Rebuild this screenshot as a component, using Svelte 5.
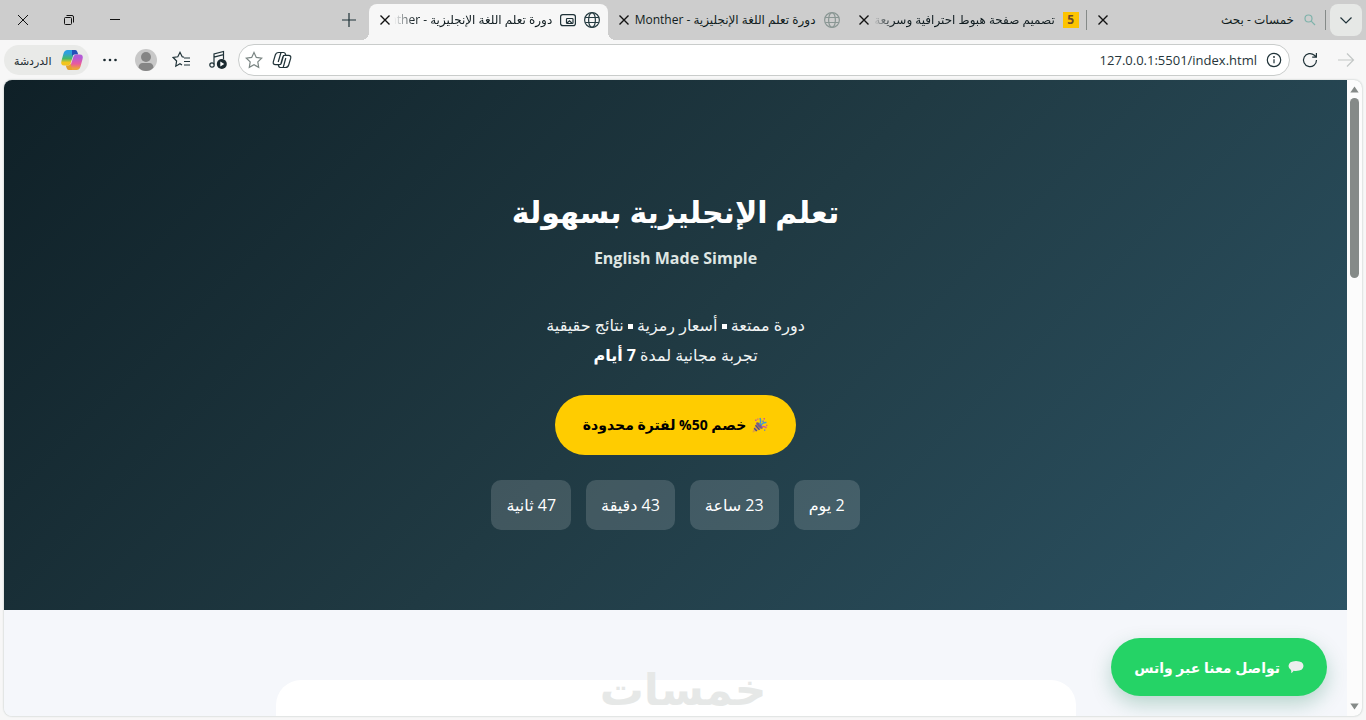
<script>
	const tabs = [
		{ title: 'خمسات - بحث', icon: 'search' },
		{ title: 'تصميم صفحة هبوط احترافية وسريعة', icon: 'five', fade: true },
		{ title: 'دورة تعلم اللغة الإنجليزية - Monther', icon: 'globe' },
		{ title: 'دورة تعلم اللغة الإنجليزية - Monther', icon: 'globe', pip: true, fade: true }
	];

	let active = $state(3);
	let url = $state('127.0.0.1:5501/index.html');

	const countdown = [
		{ value: 2, unit: 'يوم' },
		{ value: 23, unit: 'ساعة' },
		{ value: 43, unit: 'دقيقة' },
		{ value: 47, unit: 'ثانية' }
	];
</script>

<div class="browser" dir="rtl">
	<header class="tabstrip">
		<button class="tab-menu" aria-label="قائمة علامات التبويب">
			<svg width="16" height="16" viewBox="0 0 16 16"><path d="M2.5 5.5 8 11 13.5 5.5" /></svg>
		</button>

		<div class="tabs">
			{#each tabs as tab, i}
				<div class="tab" class:active={i === active} class:divided={i < 2}>
					{#if tab.icon === 'search'}
						<svg class="icon search" width="16" height="16" viewBox="0 0 16 16">
							<circle cx="6.5" cy="6.5" r="3.5" /><path d="M9.2 9.2 13 13" />
						</svg>
					{:else if tab.icon === 'five'}
						<span class="icon five">5</span>
					{:else}
						<svg class="icon globe" width="16" height="16" viewBox="0 0 16 16">
							<circle cx="8" cy="8" r="7.4" />
							<ellipse cx="8" cy="8" rx="3.4" ry="7.4" />
							<path d="M1.2 5.5H14.8M1.2 10.5H14.8" />
						</svg>
					{/if}
					{#if tab.pip}
						<svg class="icon pip" width="16" height="16" viewBox="0 0 16 16">
							<rect x="0.6" y="2.6" width="14.8" height="11" rx="2.2" />
							<rect x="6.5" y="6.5" width="6.5" height="5" rx="0.8" />
							<path d="M7 11 9.5 8.8 12 11.2" />
						</svg>
					{/if}
					<button class="title" class:fade={tab.fade} onclick={() => (active = i)}>{tab.title}</button>
					<button class="close" aria-label="إغلاق">
						<svg width="16" height="16" viewBox="0 0 16 16"><path d="M3.5 3.5 12.5 12.5M12.5 3.5 3.5 12.5" /></svg>
					</button>
				</div>
			{/each}
		</div>

		<button class="new-tab" aria-label="علامة تبويب جديدة">
			<svg width="16" height="16" viewBox="0 0 16 16"><path d="M8 1V15M1 8H15" /></svg>
		</button>

		<div class="window-controls">
			<button aria-label="تصغير">
				<svg width="12" height="12" viewBox="0 0 12 12"><path d="M1 5.5H11" /></svg>
			</button>
			<button aria-label="استعادة">
				<svg width="12" height="12" viewBox="0 0 12 12">
					<rect x="1.5" y="3.5" width="7" height="7" rx="1" />
					<path d="M3.5 1.5H9Q10.5 1.5 10.5 3V8.5" />
				</svg>
			</button>
			<button aria-label="إغلاق النافذة">
				<svg width="12" height="12" viewBox="0 0 12 12"><path d="M1 1 11 11M11 1 1 11" /></svg>
			</button>
		</div>
	</header>

	<nav class="toolbar">
		<button class="tool forward" aria-label="للأمام" disabled>
			<svg width="18" height="18" viewBox="0 0 18 18"><path d="M1 9H16.5M10 2.5 16.5 9 10 15.5" /></svg>
		</button>
		<button class="tool" aria-label="تحديث">
			<svg width="18" height="18" viewBox="0 0 18 18"><path d="M15.5 9A6.5 6.5 0 1 1 13.4 4.3L15.3 6M15.4 2V6.2H11.2" /></svg>
		</button>

		<div class="address">
			<button class="tool info" aria-label="معلومات الموقع">
				<svg width="16" height="16" viewBox="0 0 16 16">
					<circle cx="8" cy="8" r="6.7" /><path d="M8 7.2V11.3" /><circle class="dot" cx="8" cy="5" r="0.9" />
				</svg>
			</button>
			<input type="text" dir="ltr" aria-label="العنوان" bind:value={url} />
			<button class="tool" aria-label="Copilot">
				<svg width="20" height="20" viewBox="0 0 20 20">
					<path d="M6.7 2.5H11.6Q13 2.5 13.4 4L13.8 5.4H16.6Q19.3 5.4 18.7 8.2L16.7 15Q16 17.5 13.3 17.5H8.4Q7 17.5 6.6 16L6.2 14.6H3.4Q.7 14.6 1.3 11.8L3.3 5Q4 2.5 6.7 2.5Z" />
					<path d="M13.8 5.4H12.6Q11.2 5.4 10.8 6.8L8.6 14.6M6.2 14.6H7.6Q9 14.6 9.4 13.2L11.6 5.4M9 2.5 6.2 12M11.2 17.5 13.8 8" />
				</svg>
			</button>
			<button class="tool star" aria-label="إضافة إلى المفضلة">
				<svg width="18" height="18" viewBox="0 0 18 18">
					<path d="M9 1.5 11.3 6.4 16.7 7.1 12.8 10.9 13.7 16.3 9 13.7 4.3 16.3 5.2 10.9 1.3 7.1 6.7 6.4Z" />
				</svg>
			</button>
		</div>

		<div class="actions">
			<button class="tool" aria-label="الوسائط">
				<svg width="20" height="20" viewBox="0 0 20 20">
					<path d="M6 14.5V4L15.5 1.5V9M6 7.2 15.5 4.7" />
					<circle cx="4" cy="15" r="2.2" />
					<circle class="dot" cx="13.8" cy="14" r="5" />
					<path class="play" d="M12.3 11.6V16.4L16.3 14Z" />
				</svg>
			</button>
			<button class="tool" aria-label="المفضلة">
				<svg width="20" height="20" viewBox="0 0 20 20">
					<path d="M12 7.2 10.2 6.8 8 2.3 5.8 6.8 1.2 7.5 4.6 11 3.8 16.2 8 13.8 10 15M12 8H18M12 11.5H18M12 15H18" />
				</svg>
			</button>
			<button class="tool" aria-label="الملف الشخصي">
				<svg class="avatar" width="22" height="22" viewBox="0 0 22 22">
					<circle cx="11" cy="11" r="11" fill="#c8c8c8" />
					<circle cx="11" cy="8" r="5" fill="#858585" />
					<path d="M3.5 18.5Q4 14 7.5 14H14.5Q18 14 18.5 18.5Q15.5 22 11 22T3.5 18.5Z" fill="#858585" />
				</svg>
			</button>
			<button class="tool" aria-label="المزيد">
				<svg width="16" height="16" viewBox="0 0 16 16">
					<circle class="dot" cx="2.5" cy="8" r="1.3" /><circle class="dot" cx="8" cy="8" r="1.3" /><circle class="dot" cx="13.5" cy="8" r="1.3" />
				</svg>
			</button>
		</div>

		<button class="chat">
			<svg width="24" height="24" viewBox="0 0 24 24">
				<defs>
					<linearGradient id="cool" x1="0" y1="0" x2="0" y2="1">
						<stop offset="0.2" stop-color="#2d9fe0" /><stop offset="0.55" stop-color="#45b96b" /><stop offset="0.8" stop-color="#f2c51d" />
					</linearGradient>
					<linearGradient id="warm" x1="0" y1="0" x2="0" y2="1">
						<stop offset="0.2" stop-color="#b45bd6" /><stop offset="0.6" stop-color="#ea5a9d" /><stop offset="0.9" stop-color="#eda23b" />
					</linearGradient>
				</defs>
				<path d="M7.5 2H15L10.5 15.5Q9.8 17.5 7.6 17.5H4.2Q.2 17.5 1.5 12.8L3.5 5.5Q4.5 2 7.5 2Z" fill="url(#cool)" />
				<path d="M12 2H15.3Q16.8 2 17.4 4L18.2 6.5H14.5Q12.5 6.5 12 8.5Z" fill="#2450b8" />
				<path d="M16.5 22H9L13.5 8.5Q14.2 6.5 16.4 6.5H19.8Q23.8 6.5 22.5 11.2L20.5 18.5Q19.5 22 16.5 22Z" fill="url(#warm)" />
				<path d="M12 22H8.7Q7.2 22 6.6 20L5.8 17.5H8Q10 17.5 10.7 15.5Z" fill="#e5a12c" />
			</svg>
			الدردشة
		</button>
	</nav>

	<div class="viewport">
		<main class="page">
			<section class="hero">
				<h1>تعلم الإنجليزية بسهولة</h1>
				<h2 dir="ltr">English Made Simple</h2>
				<p>
					دورة ممتعة <i class="bullet"></i> أسعار رمزية <i class="bullet"></i> نتائج حقيقية<br />
					تجربة مجانية لمدة <strong>7 أيام</strong>
				</p>
				<button class="offer">
					<svg width="16" height="16" viewBox="0 0 16 16">
						<path d="M4.5 5.5 10.5 11.5 1 15.5Q.4 15.4.5 14.8Z" fill="#e3a33a" />
						<path d="M3.5 8.3 7.5 12.7M2.2 11.2 4.8 14" stroke="#4a4e8c" stroke-width="1.4" />
						<ellipse cx="7.5" cy="8.5" rx="1.7" ry="4.2" transform="rotate(-45 7.5 8.5)" fill="#7a5a84" />
						<path d="M7.5 7.5Q9.5 5 8 1M9 8.5Q10.5 5 14.5 5.5" fill="none" stroke="#3f9bd8" stroke-width="1.5" />
						<path d="M9.5 10Q12 8.5 14.5 11" fill="none" stroke="#c95aa5" stroke-width="1.4" />
						<path d="M3 2.5H4.6V4H3ZM11.5 1H13V2.5H11.5ZM5.2 1.5H6.4V2.7H5.2ZM14 7.8H15.4V9.2H14Z" fill="#d45b93" />
						<path d="M10.3 3.5H11.7V5H10.3ZM12 12.5H13.3V13.8H12Z" fill="#5b7fd0" />
					</svg>
					خصم 50% لفترة محدودة
				</button>
				<div class="countdown">
					{#each countdown as { value, unit }}
						<span class="unit">{value} {unit}</span>
					{/each}
				</div>
			</section>

			<section class="content">
				<div class="card"></div>
			</section>
		</main>

		<div class="scrollbar">
			<svg width="9" height="7" viewBox="0 0 9 7"><path d="M4.5 0.5 8.7 6.5H.3Z" /></svg>
			<div class="track"><div class="thumb"></div></div>
			<svg width="9" height="7" viewBox="0 0 9 7"><path d="M4.5 6.5 8.7.5H.3Z" /></svg>
		</div>

		<a class="whatsapp" href="#whatsapp">
			<svg width="16" height="14" viewBox="0 0 16 14">
				<path d="M8 1Q15.5 1.2 15.5 6Q15.3 10.8 8 11Q6.8 11 5.6 10.8Q4.8 12.8 3 13Q3.6 11.6 3 10Q.5 8.7.5 6Q.7 1.2 8 1Z" />
			</svg>
			تواصل معنا عبر واتس
		</a>

		<div class="watermark">خمسات</div>
	</div>
</div>

<style>
	:global(body) {
		margin: 0;
	}

	.browser {
		display: flex;
		flex-direction: column;
		height: 100vh;
		overflow: hidden;
		background: #f7f7f7;
		color: #1b2a30;
		font-family: "Open Sans", "DejaVu Sans", sans-serif;
	}

	button {
		padding: 0;
		border: 0;
		background: none;
		color: inherit;
		font: inherit;
		cursor: pointer;
	}

	svg {
		display: block;
		flex: none;
	}

	.tabstrip svg,
	.tool svg {
		fill: none;
		stroke: #1f3238;
		stroke-width: 1.2;
	}

	/* tab strip */
	.tabstrip {
		display: flex;
		flex: none;
		height: 40px;
		padding-right: 4px;
		background: #cdcdcd;
	}

	.tab-menu {
		display: grid;
		place-items: center;
		width: 32px;
		height: 32px;
		margin: 4px 0 4px 4px;
		border-radius: 8px;
		background: #e6e8e6;
	}

	.tabs {
		display: flex;
		flex: 0 1 957px;
		min-width: 0;
	}

	.tab {
		position: relative;
		display: flex;
		flex: 1;
		align-items: center;
		min-width: 0;
		height: 32px;
		margin-top: 4px;
		padding: 0 8px;
	}

	.tab.divided::before {
		content: '';
		position: absolute;
		right: 0;
		top: 6px;
		width: 1px;
		height: 20px;
		background: #858a88;
	}

	.tab.active {
		height: 36px;
		padding-bottom: 4px;
		box-sizing: border-box;
		border-radius: 8px 8px 0 0;
		background: #f7f7f7;
	}

	.tab.active::before,
	.tab.active::after {
		content: '';
		position: absolute;
		bottom: 0;
		width: 8px;
		height: 8px;
	}

	.tab.active::before {
		left: 100%;
		background: radial-gradient(circle at 100% 0, transparent 8px, #f7f7f7 8px);
	}

	.tab.active::after {
		right: 100%;
		background: radial-gradient(circle at 0 0, transparent 8px, #f7f7f7 8px);
	}

	.icon {
		margin-left: 8px;
	}

	.title {
		flex: 1;
		min-width: 0;
		overflow: hidden;
		color: #101c20;
		font-size: 12px;
		line-height: 24px;
		text-align: right;
		white-space: nowrap;
	}

	.title.fade {
		mask-image: linear-gradient(to right, transparent, #000 20px);
	}

	.tabstrip .globe {
		stroke: #8a9794;
	}

	.tabstrip .active .globe {
		stroke: #263c42;
	}

	.tabstrip .search {
		stroke: #7fb3ab;
	}

	.close {
		margin-right: 1px;
	}

	.tabstrip .close svg {
		stroke: #111;
		stroke-width: 1.4;
	}

	.five {
		flex: none;
		width: 16px;
		background: #fdc400;
		color: #6b4a2a;
		font-size: 12px;
		font-weight: 700;
		line-height: 16px;
		text-align: center;
	}

	.new-tab {
		width: 40px;
		display: grid;
		place-items: center;
	}

	.window-controls {
		display: flex;
		margin-right: auto;
	}

	.window-controls button {
		display: grid;
		place-items: center;
		width: 46px;
	}

	.window-controls svg {
		stroke: #111;
		stroke-width: 1;
	}

	/* toolbar */
	.toolbar {
		display: flex;
		flex: none;
		align-items: center;
		height: 40px;
		padding: 0 2px 0 4px;
	}

	.tool {
		display: grid;
		flex: none;
		place-items: center;
		width: 36px;
		height: 32px;
	}

	.tool .dot {
		fill: #1b2a30;
		stroke: none;
	}

	.tool .play {
		fill: #fff;
		stroke: none;
	}

	.tool .avatar {
		stroke: none;
	}

	.forward svg {
		stroke: #c3c7c6;
	}

	.address {
		display: flex;
		flex: 1;
		align-items: center;
		box-sizing: border-box;
		min-width: 0;
		height: 32px;
		margin: 0 2px;
		padding-left: 1px;
		border: 1px solid #c9cccb;
		border-radius: 16px;
		background: #fff;
	}

	.address .tool {
		width: 28px;
		height: 28px;
	}

	.address .info {
		width: 30px;
	}

	.address .star svg {
		stroke: #7a8583;
	}

	.address input {
		flex: 1;
		min-width: 0;
		padding: 0 2px;
		border: 0;
		outline: 0;
		background: none;
		color: #26353a;
		font-family: "Open Sans", sans-serif;
		font-size: 13px;
		text-align: right;
	}

	.actions {
		display: flex;
	}

	.chat {
		display: flex;
		align-items: center;
		gap: 8px;
		height: 30px;
		margin-right: 3px;
		padding: 0 5px 0 10px;
		border-radius: 15px;
		background: #e9eae8;
		font-size: 11px;
	}

	/* rendered page */
	.viewport {
		position: relative;
		display: flex;
		flex: 1;
		flex-direction: row-reverse;
		min-height: 0;
		margin: 0 4px 4px;
		overflow: hidden;
		border-radius: 8px;
		background: #fcfcfc;
		box-shadow: 0 0 2px #aab5b2;
	}

	.page {
		flex: 1;
		min-width: 0;
		overflow: hidden;
		background: #f5f7fb;
		line-height: 30px;
	}

	.hero {
		display: flex;
		flex-direction: column;
		align-items: center;
		padding: 100px 20px 80px;
		background: linear-gradient(135deg, #0f2027, #203a43, #2c5364);
		color: #fff;
		text-align: center;
	}

	h1 {
		margin: 0;
		font-size: 30px;
		font-weight: 700;
		line-height: 64px;
	}

	h2 {
		margin: 0;
		color: #dfe6e3;
		font-size: 16px;
		font-weight: 700;
		line-height: 28px;
	}

	.hero p {
		margin: 38px 0 25px;
		color: #f1f4f4;
		font-size: 16px;
	}

	.bullet {
		display: inline-block;
		width: 5px;
		height: 5px;
		background: #fff;
		vertical-align: middle;
	}

	.hero strong {
		color: #fff;
	}

	.offer {
		display: flex;
		align-items: center;
		justify-content: center;
		gap: 6px;
		height: 60px;
		padding: 0 28px;
		border-radius: 30px;
		background: #fc0;
		color: #000;
		font-size: 14px;
		font-weight: 700;
	}

	.countdown {
		display: flex;
		gap: 15px;
		margin-top: 25px;
	}

	.unit {
		padding: 10px 15px;
		border-radius: 10px;
		background: rgba(255, 255, 255, 0.15);
		font-size: 16px;
	}

	.content {
		padding: 70px 20px;
	}

	.card {
		max-width: 800px;
		min-height: 300px;
		margin: 0 auto;
		border-radius: 25px;
		background: #fff;
	}

	.watermark {
		position: absolute;
		right: 0;
		bottom: 0;
		left: 0;
		color: #e6e8e7;
		font-size: 44px;
		font-weight: 700;
		line-height: 56px;
		text-align: center;
		pointer-events: none;
	}

	.scrollbar {
		display: flex;
		flex: none;
		flex-direction: column;
		align-items: center;
		gap: 5px;
		box-sizing: border-box;
		width: 15px;
		padding: 6px 0;
	}

	.scrollbar svg {
		fill: #858a88;
	}

	.track {
		flex: 1;
		width: 9px;
	}

	.thumb {
		height: 30%;
		border-radius: 5px;
		background: #858a88;
	}

	.whatsapp {
		position: absolute;
		right: 35px;
		bottom: 20px;
		display: flex;
		align-items: center;
		gap: 8px;
		height: 58px;
		padding: 0 23px;
		border-radius: 29px;
		background: #25d366;
		box-shadow: 0 8px 20px rgba(0, 110, 70, 0.25);
		color: #fff;
		font-size: 14px;
		font-weight: 700;
		text-decoration: none;
	}

	.whatsapp svg {
		fill: #eceeee;
	}
</style>
